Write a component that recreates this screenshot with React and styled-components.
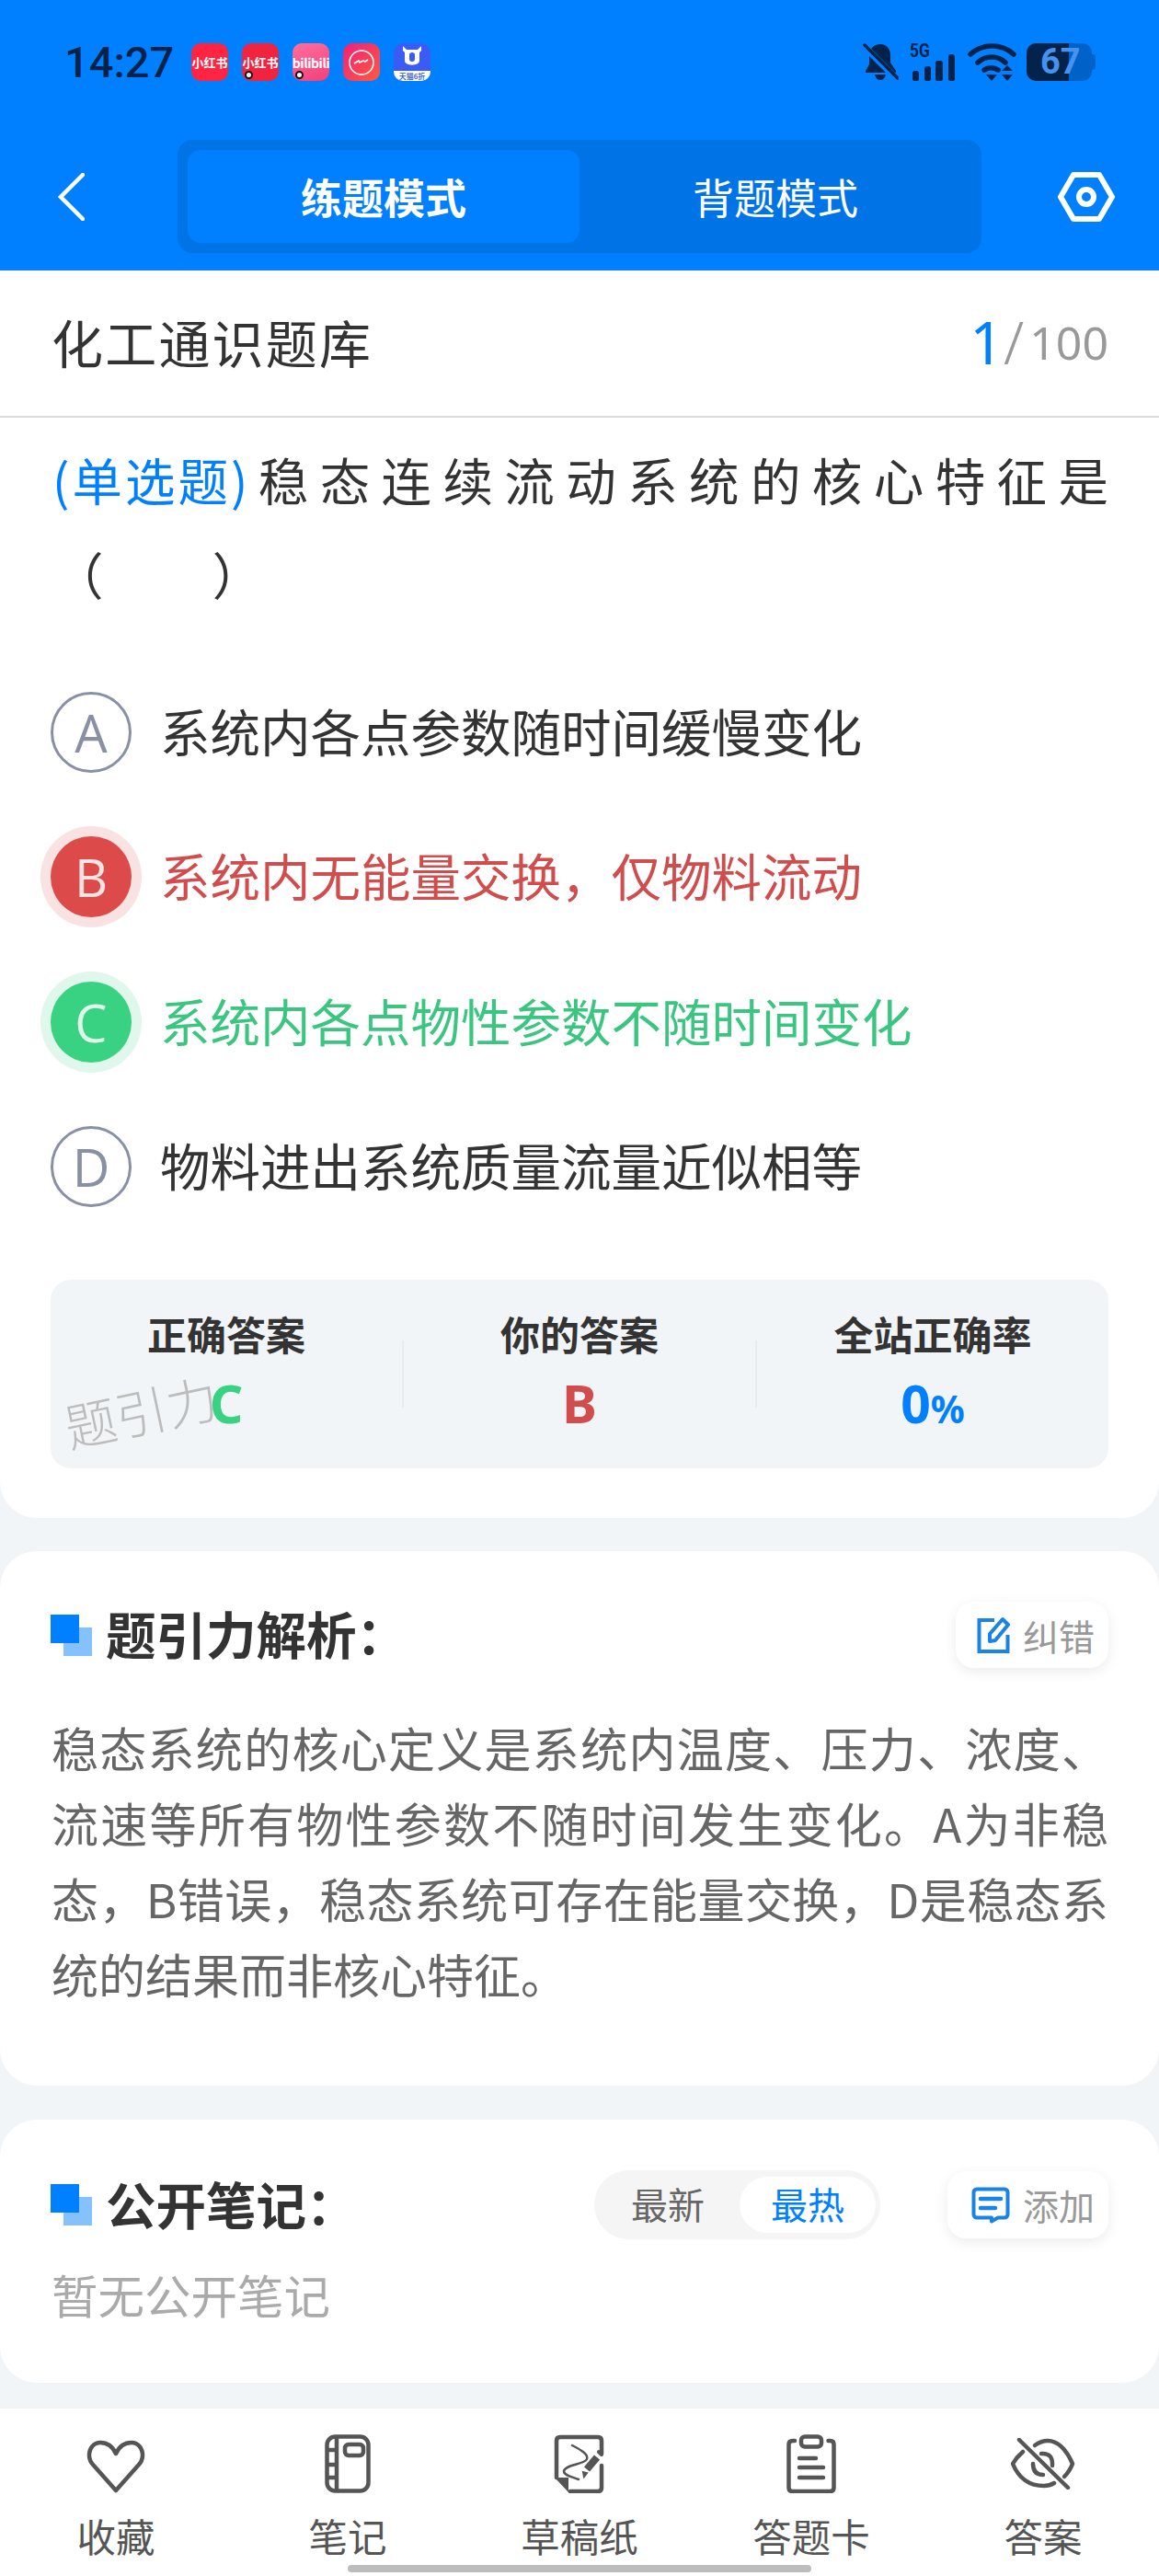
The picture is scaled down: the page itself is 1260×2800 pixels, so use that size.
import React from "react";
import styled, { createGlobalStyle } from "styled-components";

const GlobalStyle = createGlobalStyle`
  html, body {
    margin: 0;
    padding: 0;
    background: #f2f5f8;
  }
  body {
    font-family: "Noto Sans", "Noto Sans CJK SC", sans-serif;
  }
  * {
    box-sizing: border-box;
  }
`;

const CJK = `"Noto Sans CJK SC", "Noto Sans", sans-serif`;
const INK = "#03234a";

const Page = styled.div`
  position: relative;
  width: 1260px;
  height: 2800px;
  overflow: hidden;
  display: flex;
  flex-direction: column;
  background: #f2f5f8;
`;

const Header = styled.header`
  height: 294px;
  flex: none;
  background: #0080ff;
`;

const StatusBar = styled.div`
  height: 152px;
  padding: 47px 70px 0 70px;
  display: flex;
  align-items: flex-start;
`;

const Time = styled.div`
  width: 138px;
  height: 41px;
  font: 500 47px/41px Roboto, sans-serif;
  color: ${INK};
`;

const AppIcons = styled.div`
  display: flex;
  gap: 15px;
`;

const AppIcon = styled.div`
  position: relative;
  width: 40px;
  height: 41px;
  border-radius: 10px;
  background: ${(p) => p.$bg};
  color: #fff;
  display: flex;
  align-items: center;
  justify-content: center;
  font: 700 ${(p) => p.$size || 12}px/1 ${CJK};
  letter-spacing: ${(p) => p.$track || 0}px;
  white-space: nowrap;
  overflow: hidden;
`;

const RecDot = styled.span`
  position: absolute;
  left: 3px;
  bottom: 2px;
  width: 9px;
  height: 9px;
  border-radius: 50%;
  background: #fff;
  border: 2.5px solid #111;
`;

const TaobaoStrip = styled.span`
  position: absolute;
  left: 0;
  right: 0;
  bottom: 0;
  height: 11px;
  background: #fff;
  color: #2f4fe0;
  font: 500 8px/11px ${CJK};
  text-align: center;
`;

const StatusRight = styled.div`
  margin-left: auto;
  display: flex;
  align-items: flex-start;
`;

const SignalBox = styled.div`
  position: relative;
  width: 50px;
  height: 41px;
  margin-left: 12px;
`;

const FiveG = styled.span`
  position: absolute;
  left: 0;
  top: -2px;
  font: 700 21px/20px "Roboto", sans-serif;
  color: ${INK};
  transform: scaleX(0.82);
  transform-origin: left center;
`;

const Battery = styled.div`
  position: relative;
  width: 71px;
  height: 41px;
  margin: 0 3px 0 11px;
  border-radius: 10px;
  background: linear-gradient(90deg, ${INK} 65%, #0062c8 65%);
  font: 700 38px/41px "Roboto", sans-serif;
  color: #4593ec;
  padding-left: 15px;
  &::after {
    content: "";
    position: absolute;
    right: -4px;
    top: 12px;
    width: 4px;
    height: 17px;
    border-radius: 0 3px 3px 0;
    background: #0062c8;
  }
`;

const NavRow = styled.div`
  height: 123px;
  display: flex;
  align-items: center;
`;

const BackSlot = styled.div`
  width: 193px;
  padding-left: 62px;
  display: flex;
`;

const Tabs = styled.div`
  width: 874px;
  height: 123px;
  padding: 11px;
  border-radius: 16px;
  background: #0073e6;
  display: flex;
`;

const Tab = styled.div`
  flex: 1;
  border-radius: 14px;
  background: ${(p) => (p.$active ? "#0080ff" : "transparent")};
  color: #fff;
  font: ${(p) => (p.$active ? 700 : 400)} 45px/101px ${CJK};
  text-align: center;
`;

const GearSlot = styled.div`
  flex: 1;
  display: flex;
  justify-content: flex-end;
  padding-right: 48px;
`;

const QuestionCard = styled.section`
  height: 1356px;
  flex: none;
  background: #fff;
  border-radius: 0 0 40px 40px;
`;

const TitleRow = styled.div`
  height: 160px;
  padding: 0 55px 0 56px;
  border-bottom: 2px solid #dcdcdc;
  display: flex;
  align-items: center;
  justify-content: space-between;
`;

const BankName = styled.div`
  margin-bottom: 4px;
  font: 400 56px/1 ${CJK};
  letter-spacing: 2.2px;
  color: #333;
`;

const Progress = styled.div`
  display: flex;
  align-items: center;
  margin-bottom: 2px;
  font: 400 50px/1 "Noto Sans", sans-serif;
  color: #999;
`;

const ProgressNow = styled.span`
  font-size: 64px;
  color: #0080ff;
`;

const ProgressSlash = styled.span`
  font-size: 64px;
  font-weight: 300;
  margin-right: 6px;
`;

const Question = styled.div`
  padding: 16px 55px 0 57px;
  font: 400 54.5px/102px ${CJK};
  color: #333;
`;

const QuestionLine = styled.div`
  text-align: justify;
  text-align-last: justify;
`;

const QuestionType = styled.span`
  display: inline-block;
  color: #0080ff;
  letter-spacing: 3px;
  margin-right: -4px;
`;

const Blank = styled.div`
  white-space: pre;
  margin-left: 1px;
  word-spacing: -3px;
`;

const Options = styled.div`
  margin-top: 43px;
  padding-left: 55px;
`;

const OptionRow = styled.div`
  height: 157.5px;
  display: flex;
  align-items: center;
  gap: 31px;
  font: 400 54.5px/1 ${CJK};
  color: ${(p) => p.$color};
`;

const OptionText = styled.span`
  margin-bottom: 4px;
`;

const OptionBadge = styled.div`
  width: 88px;
  height: 88px;
  flex: none;
  border-radius: 50%;
  display: flex;
  align-items: center;
  justify-content: center;
  font: 400 56px/1 "Open Sans", sans-serif;
  color: ${(p) => (p.$fill ? p.$text : "#8a90a3")};
  background: ${(p) => p.$fill || "transparent"};
  border: ${(p) => (p.$fill ? "none" : "3px solid #8a90a3")};
  box-shadow: ${(p) => (p.$halo ? `0 0 0 11px ${p.$halo}` : "none")};
`;

const Stats = styled.div`
  position: relative;
  margin: 44px 55px 0;
  height: 205px;
  border-radius: 22px;
  background: #f2f5f8;
  display: flex;
  align-items: center;
`;

const StatCell = styled.div`
  flex: 1;
  height: 100%;
  padding-top: 33px;
  text-align: center;
`;

const StatLabel = styled.div`
  font: 700 43px/50px ${CJK};
  color: #333;
`;

const StatValue = styled.div`
  margin-top: 21px;
  font: 700 57px/60px "Noto Sans", sans-serif;
  color: ${(p) => p.$color};
`;

const Percent = styled.span`
  font-size: 41px;
`;

const StatDivider = styled.div`
  width: 2px;
  height: 73px;
  flex: none;
  background: #e7eaee;
`;

const Watermark = styled.div`
  position: absolute;
  left: 14px;
  top: 112px;
  font: 300 56px/60px ${CJK};
  color: #bcbcbc;
  white-space: nowrap;
  transform: rotate(-12deg);
`;

const Card = styled.section`
  flex: none;
  margin-top: ${(p) => p.$top}px;
  padding: 55px 55px ${(p) => p.$bottom}px 56px;
  background: #fff;
  border-radius: 40px;
`;

const CardHead = styled.div`
  display: flex;
  align-items: center;
  margin-left: -1px;
`;

const TitleMark = styled.div`
  position: relative;
  width: 45px;
  height: 45px;
  flex: none;
  &::before,
  &::after {
    content: "";
    position: absolute;
    width: 31px;
    height: 31px;
  }
  &::after {
    right: 0;
    bottom: 0;
    background: #85c0ff;
  }
  &::before {
    left: 0;
    top: 0;
    background: #0080ff;
    z-index: 1;
  }
`;

const CardTitle = styled.h2`
  margin: 0 0 4px 15px;
  font: 700 54.5px/68px ${CJK};
  color: #333;
`;

const ActionButton = styled.div`
  height: ${(p) => p.$height}px;
  width: ${(p) => p.$width}px;
  flex: none;
  margin-left: ${(p) => p.$left || "auto"};
  padding-right: 15px;
  border-radius: 20px;
  background: #fff;
  box-shadow: 0 4px 14px rgba(0, 0, 0, 0.08);
  display: flex;
  align-items: center;
  justify-content: flex-end;
  gap: 14px;
  font: 400 39px/1 ${CJK};
  color: #999;
`;

const Explain = styled.p`
  margin: 45px 0 0;
  font: 400 51px/82px ${CJK};
  color: #666;
  text-align: justify;
`;

const SortToggle = styled.div`
  width: 311px;
  height: 75px;
  margin-left: auto;
  padding: 7px 5px;
  border-radius: 38px;
  background: #f5f5f5;
  display: flex;
  justify-content: space-between;
`;

const SortItem = styled.div`
  width: ${(p) => (p.$active ? 148 : 150)}px;
  border-radius: 31px;
  background: ${(p) => (p.$active ? "#fff" : "transparent")};
  color: ${(p) => (p.$active ? "#0080ff" : "#666")};
  font: 400 40px/58px ${CJK};
  text-align: center;
`;

const Empty = styled.div`
  margin-top: 24px;
  font: 400 50.5px/70px ${CJK};
  color: #aaa;
`;

const BottomNav = styled.nav`
  margin-top: auto;
  height: 182px;
  flex: none;
  padding-top: 28px;
  background: #fff;
  display: grid;
  grid-template-columns: repeat(5, 252px);
  justify-content: center;
`;

const NavItem = styled.div`
  display: flex;
  flex-direction: column;
  align-items: center;
`;

const NavIconSlot = styled.div`
  height: 64px;
  display: flex;
  align-items: ${(p) => (p.$low ? "flex-end" : "center")};
  justify-content: center;
`;

const NavLabel = styled.div`
  margin-top: 21px;
  font: 400 42.5px/50px ${CJK};
  color: #555;
`;

const HomeBar = styled.div`
  position: absolute;
  left: 378px;
  bottom: 4px;
  width: 504px;
  height: 8px;
  border-radius: 4px;
  background: #bdbdbd;
`;

const options = [
  { key: "A", text: "系统内各点参数随时间缓慢变化", color: "#333" },
  {
    key: "B",
    text: "系统内无能量交换，仅物料流动",
    color: "#d14d4d",
    fill: "#dd4a4a",
    halo: "#f9e2e2",
    badgeText: "#fbe3e3",
  },
  {
    key: "C",
    text: "系统内各点物性参数不随时间变化",
    color: "#3ac681",
    fill: "#38d282",
    halo: "#e0f7eb",
    badgeText: "#def8ea",
  },
  { key: "D", text: "物料进出系统质量流量近似相等", color: "#333" },
];

function BellOff() {
  return (
    <svg width="39" height="41" viewBox="0 0 39 41">
      <path
        fill={INK}
        d="M19 1c7 0 11 5 11 12v8l6 9v2H3v-2l4-7V13C7 6 12 1 19 1zM13 34h12c-1 4-3 6-6 6s-5-2-6-6z"
      />
      <path d="M1 3l36 36" stroke="#0080ff" strokeWidth="7" />
      <path d="M2 2l36 36" stroke={INK} strokeWidth="3.5" strokeLinecap="round" />
    </svg>
  );
}

function SignalBars() {
  return (
    <svg width="50" height="41" viewBox="0 0 50 41" style={{ display: "block" }}>
      <rect x="3" y="30" width="7" height="11" rx="2.5" fill={INK} />
      <rect x="16" y="25" width="7" height="16" rx="2.5" fill={INK} />
      <rect x="28" y="19" width="8" height="22" rx="2.5" fill={INK} />
      <rect x="42" y="12" width="7" height="29" rx="2.5" fill={INK} />
    </svg>
  );
}

function Wifi() {
  return (
    <svg width="53" height="41" viewBox="0 0 53 41" style={{ marginLeft: 13 }}>
      <g fill="none" stroke={INK} strokeWidth="5.5" strokeLinecap="round">
        <path d="M3 12C16 0 37 0 50 12" />
        <path d="M11 21C19 13 33 13 41 21" />
        <path d="M18 29c4-3 11-3 15 0" />
      </g>
      <path d="M20 34h12l-6 7z" fill={INK} />
      <path d="M37 30l6-6 6 6zM37 34h12l-6 7z" fill={INK} />
    </svg>
  );
}

function ChevronBack() {
  return (
    <svg width="30" height="52" viewBox="0 0 30 52">
      <path d="M28 2L4 26l24 24" fill="none" stroke="#fff" strokeWidth="4.5" strokeLinecap="round" />
    </svg>
  );
}

function HexGear() {
  return (
    <svg width="62" height="56" viewBox="0 0 62 56">
      <path
        d="M17 4h28l14 24-14 24H17L3 28z"
        fill="none"
        stroke="#fff"
        strokeWidth="6"
        strokeLinejoin="round"
      />
      <circle cx="31" cy="28" r="8" fill="none" stroke="#fff" strokeWidth="6" />
    </svg>
  );
}

function EditIcon() {
  return (
    <svg width="36" height="40" viewBox="0 0 36 40">
      <path d="M19 4H2.5v34h31V20" fill="none" stroke="#1a84e6" strokeWidth="4" />
      <path d="M14 27l0-8L28 3l6 6-14 17z" fill="none" stroke="#1a84e6" strokeWidth="4" strokeLinejoin="round" />
    </svg>
  );
}

function NoteIcon() {
  return (
    <svg width="42" height="40" viewBox="0 0 42 40">
      <path
        d="M6 2.5h30a3.5 3.5 0 0 1 3.5 3.5v24a3.5 3.5 0 0 1-3.5 3.5h-7l-7 4v-4H6A3.5 3.5 0 0 1 2.5 30V6A3.5 3.5 0 0 1 6 2.5z"
        fill="none"
        stroke="#1a84e6"
        strokeWidth="4"
        strokeLinejoin="round"
      />
      <path d="M10 13h22M10 23h16" stroke="#1a84e6" strokeWidth="4.5" strokeLinecap="round" />
    </svg>
  );
}

const navStroke = { fill: "none", stroke: "#555", strokeWidth: 4.5, strokeLinecap: "round", strokeLinejoin: "round" };

function HeartIcon() {
  return (
    <svg width="64" height="58" viewBox="0 0 64 58">
      <path
        {...navStroke}
        d="M32 15C28 6 21 3 15 3 8 3 3 9 3 17c0 4 2 8 5 11l24 27 24-27c3-3 5-7 5-11 0-8-5-14-12-14-6 0-13 3-17 12z"
      />
    </svg>
  );
}

function NotebookIcon() {
  return (
    <svg width="50" height="64" viewBox="0 0 50 64">
      <rect {...navStroke} x="2.5" y="2.5" width="45" height="59" rx="9" />
      <path {...navStroke} strokeLinecap="butt" d="M13 2.5v59M2.5 17h10M2.5 33h10M2.5 47h10" />
      <rect {...navStroke} x="22" y="11" width="20" height="12" rx="4" />
    </svg>
  );
}

function DraftIcon() {
  return (
    <svg width="56" height="64" viewBox="0 0 56 64">
      <path {...navStroke} d="M3 47V7q0-4 4-4h41q4 0 4 4v14M52 34v24q0 4-4 4H18" />
      <path d="M1 47h15v16z" fill="#555" />
      <path {...navStroke} strokeWidth="2.5" d="M20 12c10 5 18 10 16 15-3 6-24 6-25 13 0 5 9 6 16 9" />
      <path d="M36 38l11-13" stroke="#555" strokeWidth="8" fill="none" />
      <path d="M33 46l-1-5 4 1z" fill="#555" stroke="#555" strokeWidth="2" />
      <path d="M49 19l3 3" stroke="#555" strokeWidth="4" strokeLinecap="round" />
    </svg>
  );
}

function ClipboardIcon() {
  return (
    <svg width="54" height="64" viewBox="0 0 54 64">
      <path {...navStroke} d="M9 7H7Q2.5 7 2.5 11v47q0 4 4 4h41q4 0 4-4V11q0-4-4-4h-2" />
      <rect {...navStroke} x="16" y="2.5" width="22" height="11" rx="4" />
      <path {...navStroke} d="M14 26h18M14 36h26M14 47h26" />
    </svg>
  );
}

function EyeOffIcon() {
  return (
    <svg width="70" height="56" viewBox="0 0 70 56">
      <path {...navStroke} d="M26 8q7-5 14-5 16 0 27 25-3 8-9 14" />
      <path {...navStroke} d="M13 15Q6 21 2 28q10 24 34 24 6 0 11-3" />
      <path {...navStroke} d="M9 2l53 52" />
      <path {...navStroke} d="M33 17q13-1 12 13M24 28q0 12 11 12" />
    </svg>
  );
}

const navItems = [
  { label: "收藏", Icon: HeartIcon, low: true },
  { label: "笔记", Icon: NotebookIcon },
  { label: "草稿纸", Icon: DraftIcon },
  { label: "答题卡", Icon: ClipboardIcon },
  { label: "答案", Icon: EyeOffIcon },
];

export default function App() {
  return (
    <Page>
      <GlobalStyle />
      <Header>
        <StatusBar>
          <Time>14:27</Time>
          <AppIcons>
            <AppIcon $bg="#ff2442" $size={13}>小红书</AppIcon>
            <AppIcon $bg="#f0243e" $size={13}>
              小红书
              <RecDot />
            </AppIcon>
            <AppIcon $bg="linear-gradient(160deg,#ff6f9c,#f0407a)" $size={14} $track={-0.4}>
              bilibili
              <RecDot />
            </AppIcon>
            <AppIcon $bg="linear-gradient(135deg,#f0207a,#ff5a3c)">
              <svg width="30" height="30" viewBox="0 0 30 30">
                <circle cx="15" cy="15" r="13" fill="none" stroke="#fff" strokeWidth="1.6" />
                <path d="M7 16l5-3 1 2 4-2 2 1 3-2" fill="none" stroke="#fff" strokeWidth="1.6" />
              </svg>
            </AppIcon>
            <AppIcon $bg="#3b5bf5">
              <svg width="28" height="28" viewBox="0 0 26 28" style={{ marginTop: -11 }}>
                <path d="M3 2l4 4h12l4-4v5l-2 2v9c0 6-16 6-16 0V9L3 7z" fill="#fff" />
                <rect x="10" y="9" width="6" height="10" rx="3" fill="#3b5bf5" />
              </svg>
              <TaobaoStrip>天猫6折</TaobaoStrip>
            </AppIcon>
          </AppIcons>
          <StatusRight>
            <BellOff />
            <SignalBox>
              <FiveG>5G</FiveG>
              <SignalBars />
            </SignalBox>
            <Wifi />
            <Battery>67</Battery>
          </StatusRight>
        </StatusBar>
        <NavRow>
          <BackSlot>
            <ChevronBack />
          </BackSlot>
          <Tabs>
            <Tab $active>练题模式</Tab>
            <Tab>背题模式</Tab>
          </Tabs>
          <GearSlot>
            <HexGear />
          </GearSlot>
        </NavRow>
      </Header>

      <QuestionCard>
        <TitleRow>
          <BankName>化工通识题库</BankName>
          <Progress>
            <ProgressNow>1</ProgressNow>
            <ProgressSlash>/</ProgressSlash>
            100
          </Progress>
        </TitleRow>
        <Question>
          <QuestionLine>
            <QuestionType>(单选题)</QuestionType>稳态连续流动系统的核心特征是
          </QuestionLine>
          <Blank>（{"\u3000\u3000 "}）</Blank>
        </Question>
        <Options>
          {options.map((o) => (
            <OptionRow key={o.key} $color={o.color}>
              <OptionBadge $fill={o.fill} $halo={o.halo} $text={o.badgeText}>
                {o.key}
              </OptionBadge>
              <OptionText>{o.text}</OptionText>
            </OptionRow>
          ))}
        </Options>
        <Stats>
          <StatCell>
            <StatLabel>正确答案</StatLabel>
            <StatValue $color="#38d282">C</StatValue>
          </StatCell>
          <StatDivider />
          <StatCell>
            <StatLabel>你的答案</StatLabel>
            <StatValue $color="#d14d4d">B</StatValue>
          </StatCell>
          <StatDivider />
          <StatCell>
            <StatLabel>全站正确率</StatLabel>
            <StatValue $color="#0080ff">
              0<Percent>%</Percent>
            </StatValue>
          </StatCell>
          <Watermark>题引力</Watermark>
        </Stats>
      </QuestionCard>

      <Card $top={36} $bottom={81}>
        <CardHead>
          <TitleMark />
          <CardTitle>题引力解析：</CardTitle>
          <ActionButton $height={72} $width={166}>
            <EditIcon />
            纠错
          </ActionButton>
        </CardHead>
        <Explain>
          稳态系统的核心定义是系统内温度、压力、浓度、流速等所有物性参数不随时间发生变化。A为非稳态，B错误，稳态系统可存在能量交换，D是稳态系统的结果而非核心特征。
        </Explain>
      </Card>

      <Card $top={37} $bottom={62}>
        <CardHead>
          <TitleMark />
          <CardTitle>公开笔记：</CardTitle>
          <SortToggle>
            <SortItem>最新</SortItem>
            <SortItem $active>最热</SortItem>
          </SortToggle>
          <ActionButton $height={73} $width={175} $left="73px">
            <NoteIcon />
            添加
          </ActionButton>
        </CardHead>
        <Empty>暂无公开笔记</Empty>
      </Card>

      <BottomNav>
        {navItems.map(({ label, Icon, low }) => (
          <NavItem key={label}>
            <NavIconSlot $low={low}>
              <Icon />
            </NavIconSlot>
            <NavLabel>{label}</NavLabel>
          </NavItem>
        ))}
      </BottomNav>
      <HomeBar />
    </Page>
  );
}
